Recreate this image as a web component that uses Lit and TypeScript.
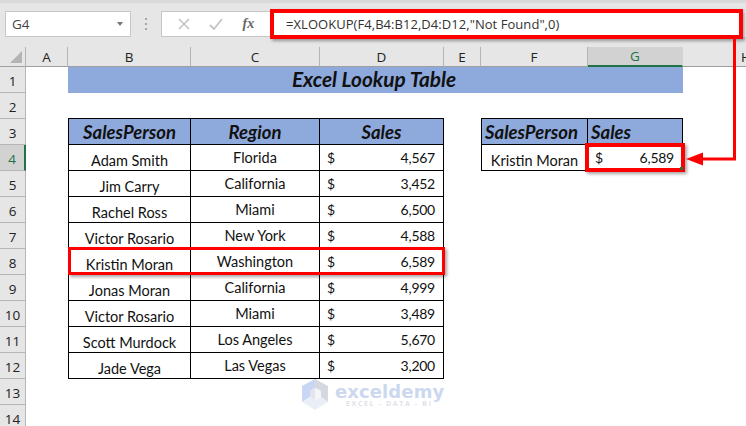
import { LitElement, html, css, svg } from "lit";
import { customElement } from "lit/decorators.js";

const COLS = ["A", "B", "C", "D", "E", "F", "G", "H"];
const ROWS = [1, 2, 3, 4, 5, 6, 7, 8, 9, 10, 11, 12, 13, 14];
const DATA: [string, string, string][] = [
  ["Adam Smith", "Florida", "4,567"],
  ["Jim Carry", "California", "3,452"],
  ["Rachel Ross", "Miami", "6,500"],
  ["Victor Rosario", "New York", "4,588"],
  ["Kristin Moran", "Washington", "6,589"],
  ["Jonas Moran", "California", "4,999"],
  ["Victor Rosario", "Miami", "3,489"],
  ["Scott Murdock", "Los Angeles", "5,670"],
  ["Jade Vega", "Las Vegas", "3,200"],
];

@customElement("app-root")
export class AppRoot extends LitElement {
  static styles = css`
    :host { display: block; width: 746px; height: 426px; overflow: hidden; position: relative; background: #e6e6e6; font-family: "Lato", "Liberation Sans", sans-serif; color: #111; }
    .fbar { height: 47px; box-sizing: border-box; padding: 8px 0 0 5px; display: flex; align-items: flex-start; border-top: 3px solid #d9d9d9; }
    .box { background: #fff; border: 1px solid #c6c6c6; height: 26px; box-sizing: border-box; display: flex; align-items: center; }
    .name { width: 126px; padding: 0 7px 0 6px; justify-content: space-between; font: 13.5px "Open Sans", sans-serif; color: #444; }
    .caret { width: 0; height: 0; border: 3.5px solid transparent; border-top: 4px solid #777; border-bottom: 0; }
    .dots { width: 30px; display: flex; flex-direction: column; align-items: center; gap: 3px; padding-top: 7px; box-sizing: border-box; height: 26px; }
    .dots i { width: 2px; height: 2px; background: #a6a6a6; }
    .tools { width: 109px; justify-content: space-around; padding: 0 6px; border-right: 0; }
    .fx { font: italic 700 14px "Liberation Serif", serif; color: #666; }
    .formula { flex: 1; border: 0; padding-left: 16px; font: 13px "Open Sans", sans-serif; letter-spacing: .05px; color: #333; white-space: nowrap; }
    .sheet { display: grid; grid-template-columns: 26px 42px 123px 129px 124px 37px 107px 95px 1fr; grid-template-rows: 20px repeat(14, 26px); }
    .corner { background: #e6e6e6; border-right: 1px solid #b5b5b5; border-bottom: 1px solid #9f9f9f; display: flex; align-items: flex-end; justify-content: flex-end; padding: 0 3px 3px 0; }
    .ch { background: #e6e6e6; border-right: 1px solid #b5b5b5; border-bottom: 1px solid #9f9f9f; font: 13.5px "Open Sans", sans-serif; color: #222; display: flex; align-items: center; justify-content: center; box-sizing: border-box; }
    .ch.on { background: #d2d2d2; border-bottom: 2px solid #217346; color: #217346; border-right-color: #d2d2d2; }
    .ch.h { border-right: 0; justify-content: flex-start; padding-left: 58px; overflow: hidden; }
    .rh { background: #e6e6e6; border-right: 1px solid #b5b5b5; border-bottom: 1px solid #b5b5b5; font: 13.5px "Open Sans", sans-serif; color: #222; display: flex; align-items: center; justify-content: center; box-sizing: border-box; grid-column: 1; padding-top: 2px; }
    .rh.on { background: #d2d2d2; border-right: 2px solid #217346; color: #217346; }
    .c { background: #fff; font-size: 14.5px; display: flex; align-items: center; justify-content: center; box-sizing: border-box; min-width: 0; white-space: nowrap; }
    .title { grid-column: 3 / 9; background: #8ea9db; font: italic 700 20.8px "Lato", sans-serif; justify-content: center; padding: 0 3px 3px 0; }
    .b { border-right: 1px solid #000; border-bottom: 1px solid #000; }
    .l { border-left: 1px solid #000; }
    .under { border-bottom: 1px solid #000; }
    .hd { background: #8ea9db; font: italic 700 18.5px "Lato", sans-serif; }
    .left { justify-content: flex-start; padding-left: 3px; }
    .low { padding-top: 5px; }
    .money { justify-content: space-between; padding: 0 8px 0 7px; font-size: 14px; letter-spacing: -.25px; }
    .overlay { position: absolute; pointer-events: none; box-sizing: border-box; }
    .red { border: 4px solid #f00; box-shadow: 2px 2px 3px rgba(0,0,0,.35); }
    .red.thin { border-width: 3px; }
    .mark { position: absolute; left: 302px; top: 379px; display: flex; gap: 6px; align-items: flex-start; pointer-events: none; }
    .words { padding-top: 2px; }
    .brand { font: 700 18px/22px "DejaVu Sans", sans-serif; color: #ccd8ef; letter-spacing: .1px; }
    .tag { font: 700 7px/8px "Open Sans", sans-serif; color: #dfe2e8; letter-spacing: 1.65px; margin: -3px 0 0 11px; white-space: pre; }
    .handle { width: 3px; height: 3px; background: #217346; left: 680px; top: 167px; }
  `;

  render() {
    const cells: unknown[] = [];
    const blank = html`<div class="c"></div>`;
    const under = html`<div class="c under"></div>`;
    for (const r of ROWS) {
      cells.push(html`<div class="rh ${r === 4 ? "on" : ""}">${r}</div>`, blank);
      if (r === 1) {
        cells.push(html`<div class="c title">Excel Lookup Table</div>`, blank);
        continue;
      }
      if (r === 2) {
        cells.push(under, under, under, blank, under, under, blank);
        continue;
      }
      if (r === 3) {
        cells.push(
          html`<div class="c hd l b">SalesPerson</div>`,
          html`<div class="c hd b">Region</div>`,
          html`<div class="c hd b">Sales</div>`,
          blank,
          html`<div class="c hd l b left">SalesPerson</div>`,
          html`<div class="c hd b left">Sales</div>`,
          blank
        );
        continue;
      }
      const d = r <= 12 ? DATA[r - 4] : null;
      if (d) {
        cells.push(
          html`<div class="c l b low">${d[0]}</div>`,
          html`<div class="c b">${d[1]}</div>`,
          html`<div class="c b money"><span>$</span><span>${d[2]}</span></div>`
        );
      } else {
        cells.push(blank, blank, blank);
      }
      cells.push(blank);
      if (r === 4) {
        cells.push(
          html`<div class="c l b low">Kristin Moran</div>`,
          html`<div class="c b money"><span>$</span><span>6,589</span></div>`,
          blank
        );
      } else {
        cells.push(blank, blank, blank);
      }
    }

    return html`
      <div class="fbar">
        <div class="box name">G4<span class="caret"></span></div>
        <div class="dots"><i></i><i></i><i></i></div>
        <div class="box tools">
          <svg width="12" height="12" viewBox="0 0 12 12"><path d="M1 1l10 10M11 1L1 11" stroke="#c4c4c4" stroke-width="1.6" fill="none"/></svg>
          <svg width="14" height="12" viewBox="0 0 14 12"><path d="M1 7l4 4 8-10" stroke="#c4c4c4" stroke-width="1.8" fill="none"/></svg>
          <span class="fx">fx</span>
        </div>
        <div class="box formula">=XLOOKUP(F4,B4:B12,D4:D12,"Not Found",0)</div>
      </div>
      <div class="sheet">
        <div class="corner"><svg width="12" height="12" viewBox="0 0 12 12"><path d="M12 0v12H0z" fill="#b4b4b4"/></svg></div>
        ${COLS.map((c) => html`<div class="ch ${c === "G" ? "on" : ""} ${c === "H" ? "h" : ""}">${c}</div>`)}
        ${cells}
      </div>
      <div class="overlay red" style="left:270px;top:9px;width:473px;height:30px"></div>
      <div class="overlay red" style="left:585px;top:143px;width:100px;height:29px"></div>
      <div class="overlay red thin" style="left:68px;top:247px;width:377px;height:28px"></div>
      <div class="overlay handle"></div>
      <svg class="overlay" style="left:0;top:0" width="746" height="426">
        ${svg`<path d="M734.5 38V159H700" stroke="#f00" stroke-width="3" fill="none"/><path d="M686 159l17-6.500v13z" fill="#f00"/>`}
      </svg>
      <div class="mark">
        <svg width="27" height="32" viewBox="0 0 27 32">
          <path d="M13 0L0 7V23L8 18V12L13 9z" fill="#c9d7f4"/>
          <path d="M13 0L26 7V23L19 18V12L13 9z" fill="#d5d8de"/>
          <path d="M0 23L13 31 26 23 19 18 13 21 8 18z" fill="#eaeff7"/>
          <path d="M13 9L8 12V18L13 21z" fill="#e2e6ec"/>
          <path d="M13 9L19 12V18L13 21z" fill="#f3f5f8"/>
        </svg>
        <div class="words"><div class="brand">exceldemy</div><div class="tag">EXCEL - DATA - BI</div></div>
      </div>
    `;
  }
}
